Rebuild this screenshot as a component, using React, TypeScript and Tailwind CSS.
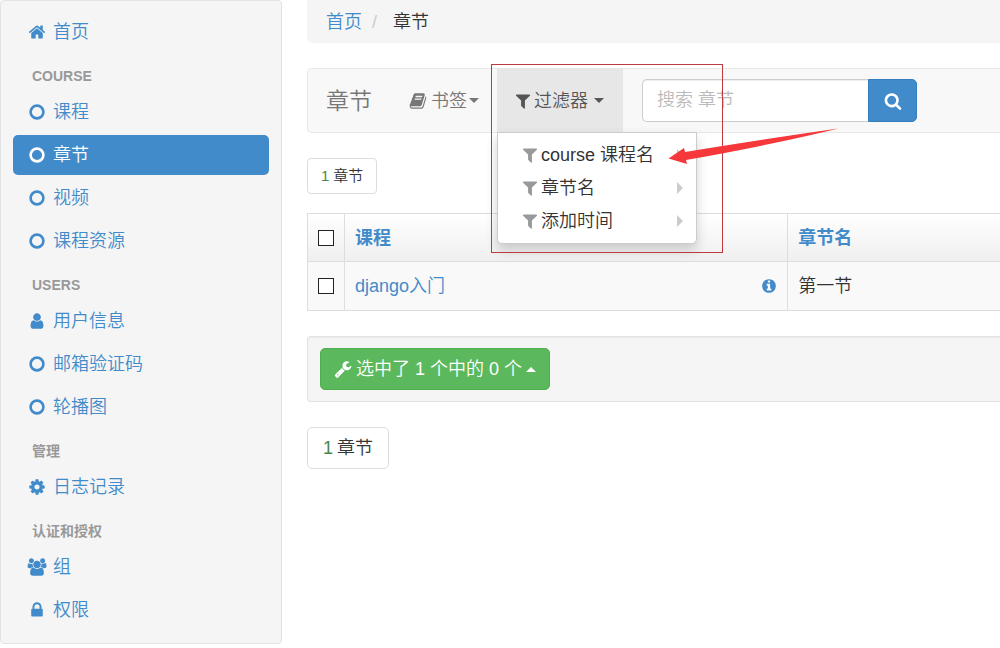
import { useState } from "react";
import type { ReactNode } from "react";
import clsx from "clsx";

const iconPaths = {
  home: "M1472 992v480q0 26-19 45t-45 19h-384v-384h-256v384h-384q-26 0-45-19t-19-45v-480q0-1 .5-3t.5-3l575-474 575 474q1 2 1 6zm223-69l-62 74q-8 9-21 11h-3q-13 0-21-7l-692-577-692 577q-12 8-24 7-13-2-21-11l-62-74q-8-10-7-23.5t11-21.5l719-599q32-26 76-26t76 26l244 204v-195q0-14 9-23t23-9h192q14 0 23 9t9 23v408l219 182q10 8 11 21.5t-7 23.5z",
  circle:
    "M896 128a768 768 0 0 1 0 1536a768 768 0 0 1 0-1536zM896 390a506 506 0 0 0 0 1012a506 506 0 0 0 0-1012z",
  user: "M1536 1399q0 109-62.5 187t-150.5 78h-854q-88 0-150.5-78t-62.5-187q0-85 8.5-160.5t31.5-152 58.5-131 94-89 134.5-34.5q131 128 313 128t313-128q76 0 134.5 34.5t94 89 58.5 131 31.5 152 8.5 160.5zm-256-887q0 159-112.5 271.5t-271.5 112.5-271.5-112.5-112.5-271.5 112.5-271.5 271.5-112.5 271.5 112.5 112.5 271.5z",
  cog: "M1152 896q0-106-75-181t-181-75-181 75-75 181 75 181 181 75 181-75 75-181zm512-109v222q0 12-8 23t-20 13l-185 28q-19 54-39 91 35 50 107 138 10 12 10 25t-9 23q-27 37-99 108t-94 71q-12 0-26-9l-138-108q-44 23-91 38-16 136-29 186-7 28-36 28h-222q-14 0-24.5-8.5t-11.5-21.5l-28-184q-49-16-90-37l-141 107q-10 9-25 9-14 0-25-11-126-114-165-168-7-10-7-23 0-12 8-23 15-21 51-66.5t54-70.5q-27-50-41-99l-183-27q-13-2-21-12.5t-8-23.5v-222q0-12 8-23t19-13l186-28q14-46 39-92-40-57-107-138-10-12-10-24 0-10 9-23 26-36 98.5-107.5t94.5-71.5q13 0 26 10l138 107q44-23 91-38 16-136 29-186 7-28 36-28h222q14 0 24.5 8.5t11.5 21.5l28 184q49 16 90 37l142-107q9-9 24-9 13 0 25 10 129 119 165 170 7 8 7 22 0 12-8 23-15 21-51 66.5t-54 70.5q26 50 41 98l183 28q13 2 21 12.5t8 23.5z",
  group:
    "M657 896q-162 5-265 128h-134q-82 0-138-40.5t-56-118.5q0-353 124-353 6 0 43.5 21t97.5 42.5 119 21.5q67 0 133-23-5 37-5 66 0 159 90 293zm1071 637q0 120-73 189.5t-194 69.5h-874q-121 0-194-69.5t-73-189.5q0-53 3.5-103.5t14-109 26.5-108.5 43-97.5 62-81 85.5-53.5 111.5-20q10 0 43 21.5t73 48 107 48 135 21.5 135-21.5 107-48 73-48 43-21.5q61 0 111.5 20t85.5 53.5 62 81 43 97.5 26.5 108.5 14 109 3.5 103.5zm-1024-1277q0 106-75 181t-181 75-181-75-75-181 75-181 181-75 181 75 75 181zm704 384q0 159-112.5 271.5t-271.5 112.5-271.5-112.5-112.5-271.5 112.5-271.5 271.5-112.5 271.5 112.5 112.5 271.5zm576 225q0 78-56 118.5t-138 40.5h-134q-103-123-265-128 90-134 90-293 0-29-5-66 66 23 133 23 59 0 119-21.5t97.5-42.5 43.5-21q124 0 124 353zm-128-609q0 106-75 181t-181 75-181-75-75-181 75-181 181-75 181 75 75 181z",
  lock: "M640 768h512v-192q0-106-75-181t-181-75-181 75-75 181v192zm832 96v576q0 40-28 68t-68 28h-960q-40 0-68-28t-28-68v-576q0-40 28-68t68-28h32v-192q0-184 132-316t316-132 316 132 132 316v192h32q40 0 68 28t28 68z",
  book: "M1703 478q40 57 18 129l-275 906q-19 64-76.5 107.5t-122.5 43.5h-923q-77 0-148.5-53.5t-99.5-131.5q-24-67-2-127 0-4 3-27t4-37q1-8-3-21.5t-3-19.5q2-11 8-21t16.5-23.5 16.5-23.5q23-38 45-91.5t30-91.5q3-10 .5-30t-.5-28q3-11 17-28t17-23q21-36 42-92t25-90q1-9-2.5-32t.5-28q4-13 22-30.5t22-22.5q19-26 42.5-84.5t27.5-96.5q1-8-3-25.5t-2-26.5q2-8 9-18t18-23 17-21q8-12 16.5-30.5t15-35 16-36 19.5-32 26.5-23.5 36-11.5 47.5 5.5l-1 3q38-9 51-9h761q74 0 114 56t18 130l-274 906q-36 119-71.5 153.5t-128.5 34.5h-869q-27 0-38 15-11 16-1 43 24 70 144 70h923q29 0 56-15.5t35-41.5l300-987q7-22 5-57 38 15 59 43zm-1064 2q-4 13 2 22.5t20 9.5h608q13 0 25.5-9.5t16.5-22.5l21-64q4-13-2-22.5t-20-9.5h-608q-13 0-25.5 9.5t-16.5 22.5zm-83 256q-4 13 2 22.5t20 9.5h608q13 0 25.5-9.5t16.5-22.5l21-64q4-13-2-22.5t-20-9.5h-608q-13 0-25.5 9.5t-16.5 22.5z",
  filter:
    "M1595 295q17 41-14 70l-493 493v742q0 42-39 59-13 5-25 5-27 0-45-19l-256-256q-19-19-19-45v-486l-493-493q-31-29-14-70 17-39 59-39h1280q42 0 59 39z",
  search:
    "M1216 832q0-185-131.5-316.5t-316.5-131.5-316.5 131.5-131.5 316.5 131.5 316.5 316.5 131.5 316.5-131.5 131.5-316.5zm512 832q0 52-38 90t-90 38q-54 0-90-38l-343-342q-179 124-399 124-143 0-273.5-55.5t-225-150-150-225-55.5-273.5 55.5-273.5 150-225 225-150 273.5-55.5 273.5 55.5 225 150 150 225 55.5 273.5q0 220-124 399l343 343q37 37 37 90z",
  info: "M1152 1376v-160q0-14-9-23t-23-9h-96v-512q0-14-9-23t-23-9h-320q-14 0-23 9t-9 23v160q0 14 9 23t23 9h96v320h-96q-14 0-23 9t-9 23v160q0 14 9 23t23 9h448q14 0 23-9t9-23zm-128-896v-160q0-14-9-23t-23-9h-192q-14 0-23 9t-9 23v160q0 14 9 23t23 9h192q14 0 23-9t9-23zm640 416q0 209-103 385.5t-279.5 279.5-385.5 103-385.5-103-279.5-279.5-103-385.5 103-385.5 279.5-279.5 385.5-103 385.5 103 279.5 279.5 103 385.5z",
  wrench:
    "M448 1472q0-26-19-45t-45-19-45 19-19 45 19 45 45 19 45-19 19-45zm644-420l-682 682q-37 37-90 37-52 0-91-37l-106-108q-38-36-38-90 0-53 38-91l681-681q39 98 114.5 173.5t173.5 114.5zm634-435q0 39-23 106-47 134-164.5 217.5t-258.5 83.5q-185 0-316.5-131.5t-131.5-316.5 131.5-316.5 316.5-131.5q58 0 121.5 16.5t107.5 46.5q16 11 16 28t-16 28l-293 169v224l193 107q5-3 79-48.5t135.5-81 70.5-35.5q15 0 23.5 10t8.5 25z",
};

type IconName = keyof typeof iconPaths;

function Icon({ name, className = "size-[18px]" }: { name: IconName; className?: string }) {
  return (
    <svg
      aria-hidden="true"
      viewBox={name === "group" ? "0 0 2048 1792" : "0 0 1792 1792"}
      className={clsx("shrink-0 fill-current", className)}
    >
      <path d={iconPaths[name]} />
    </svg>
  );
}

function Caret({ up = false }: { up?: boolean }) {
  return (
    <svg aria-hidden="true" viewBox="0 0 10 5" className="h-[5px] w-[10px] shrink-0 fill-current">
      <path d={up ? "M0 5L5 0L10 5Z" : "M0 0H10L5 5Z"} />
    </svg>
  );
}

const menuGroups: { title?: string; items: { label: string; icon: IconName }[] }[] = [
  { items: [{ label: "首页", icon: "home" }] },
  {
    title: "COURSE",
    items: [
      { label: "课程", icon: "circle" },
      { label: "章节", icon: "circle" },
      { label: "视频", icon: "circle" },
      { label: "课程资源", icon: "circle" },
    ],
  },
  {
    title: "USERS",
    items: [
      { label: "用户信息", icon: "user" },
      { label: "邮箱验证码", icon: "circle" },
      { label: "轮播图", icon: "circle" },
    ],
  },
  { title: "管理", items: [{ label: "日志记录", icon: "cog" }] },
  {
    title: "认证和授权",
    items: [
      { label: "组", icon: "group" },
      { label: "权限", icon: "lock" },
    ],
  },
];

const filters = ["course 课程名", "章节名", "添加时间"];

function Sidebar() {
  return (
    <nav className="w-[282px] shrink-0 rounded border border-[#e3e3e3] bg-[#f5f5f5] px-3 pt-[11px] pb-[13px]">
      {menuGroups.map((group, i) => (
        <div key={i}>
          {group.title && (
            <h2 className="px-[19px] pt-4 pb-2 text-sm leading-4 font-bold text-[#999]">
              {group.title}
            </h2>
          )}
          <ul className="flex flex-col gap-[3px]">
            {group.items.map((item) => (
              <li key={item.label}>
                <a
                  href="#"
                  className={clsx(
                    "flex h-10 items-center gap-[7px] rounded-[5px] px-[15px]",
                    item.label === "章节" ? "bg-[#428bca] text-white" : "text-[#428bca]"
                  )}
                >
                  <span className="flex w-[18px] justify-center">
                    <Icon
                      name={item.icon}
                      className={item.icon === "group" ? "h-[18px] w-5" : "size-[18px]"}
                    />
                  </span>
                  {item.label}
                </a>
              </li>
            ))}
          </ul>
        </div>
      ))}
    </nav>
  );
}

// red frame and arrow that point at the first filter
function Callout() {
  return (
    <svg
      aria-hidden="true"
      viewBox="0 0 350 190"
      className="pointer-events-none absolute -top-[5px] -left-1.5 z-20 h-[190px] w-[350px]"
    >
      <rect x="0.5" y="0.5" width="231" height="188" fill="none" stroke="#c0393f" />
      <path d="M177.500 94.500L193 84L194 88Q280 74 347.500 64.500Q280 81 195 96L196 100Z" fill="#f6383b" />
    </svg>
  );
}

function FilterMenu() {
  const [open, setOpen] = useState(true);
  return (
    <div className="relative flex">
      <button
        type="button"
        aria-expanded={open}
        onClick={() => setOpen(!open)}
        className={clsx(
          "flex items-center pr-[19px] pl-[17px]",
          open ? "bg-[#e7e7e7] text-[#555]" : "text-[#777]"
        )}
      >
        <Icon name="filter" />
        <span className="mr-1.5 ml-0.5">过滤器</span>
        <Caret />
      </button>
      {open && (
        <ul className="absolute top-full left-0 z-10 flex w-[200px] flex-col gap-px rounded-b-[5px] border border-[#ccc] bg-white py-1.5 shadow-[0_6px_12px_rgba(0,0,0,0.18)]">
          {filters.map((filter) => (
            <li key={filter}>
              <a href="#" className="flex h-8 items-center pr-[13px] pl-[23px] text-[#333]">
                <Icon name="filter" className="size-[18px] text-[#999]" />
                <span className="ml-0.5 flex-1">{filter}</span>
                <svg aria-hidden="true" viewBox="0 0 6 12" className="h-3 w-1.5 fill-[#ccc]">
                  <path d="M0 0L6 6L0 12Z" />
                </svg>
              </a>
            </li>
          ))}
        </ul>
      )}
      <Callout />
    </div>
  );
}

function Toolbar() {
  return (
    <div className="flex h-[65px] rounded-l-[5px] border border-r-0 border-[#e7e7e7] bg-[#f8f8f8]">
      <h1 className="flex items-center px-[18px] text-[23px] text-[#777]">章节</h1>
      <button type="button" className="flex items-center pr-[18px] pl-[19px] text-[#777]">
        <Icon name="book" />
        <span className="mr-0.5 ml-1">书签</span>
        <Caret />
      </button>
      <FilterMenu />
      <form className="flex items-center pl-[19px]" onSubmit={(e) => e.preventDefault()}>
        <input
          type="text"
          aria-label="搜索 章节"
          placeholder="搜索 章节"
          className="h-[43px] w-[226px] rounded-l-[5px] border border-r-0 border-[#ccc] bg-white px-3.5 shadow-[inset_0_1px_1px_rgba(0,0,0,0.075)] outline-none placeholder:text-[#bbb]"
        />
        <button
          type="submit"
          aria-label="搜索"
          className="flex h-[43px] w-[49px] items-center justify-center rounded-r-[5px] border border-[#357ebd] bg-[#428bca] text-white"
        >
          <Icon name="search" />
        </button>
      </form>
    </div>
  );
}

function Cell({ children, className }: { children: ReactNode; className?: string }) {
  return <td className={clsx("border border-[#ddd] px-2.5", className)}>{children}</td>;
}

const checkboxClass =
  "block size-4 appearance-none border border-[#222] bg-white checked:bg-[#428bca]";

function ChapterTable() {
  const [selected, setSelected] = useState(false);
  const toggle = () => setSelected(!selected);
  return (
    <table className="w-full table-fixed border-collapse">
      <colgroup>
        <col className="w-[37px]" />
        <col className="w-[64%]" />
        <col />
      </colgroup>
      <thead>
        <tr className="h-12 bg-linear-to-b from-white to-[#efefef] text-left text-[#428bca]">
          <th className="border border-[#ddd] px-2.5">
            <input type="checkbox" aria-label="全选" checked={selected} onChange={toggle} className={checkboxClass} />
          </th>
          <th className="border border-[#ddd] px-2.5 font-bold">
            <a href="#">课程</a>
          </th>
          <th className="border border-r-0 border-[#ddd] px-2.5 font-bold">
            <a href="#">章节名</a>
          </th>
        </tr>
      </thead>
      <tbody>
        <tr className="h-[49px] bg-[#f9f9f9]">
          <Cell>
            <input type="checkbox" aria-label="第一节" checked={selected} onChange={toggle} className={checkboxClass} />
          </Cell>
          <Cell>
            <div className="flex items-center justify-between text-[#428bca]">
              <a href="#">django入门</a>
              <button type="button" aria-label="详情">
                <Icon name="info" className="size-4" />
              </button>
            </div>
          </Cell>
          <Cell className="border-r-0">第一节</Cell>
        </tr>
      </tbody>
    </table>
  );
}

export default function App() {
  return (
    <div className="flex items-start overflow-hidden bg-white font-['Liberation_Sans','Noto_Sans_CJK_SC',sans-serif] text-lg leading-6 font-[350] text-[#333]">
      <Sidebar />
      <main className="ml-[25px] min-w-0 flex-1">
        <ol className="flex h-[43px] items-center rounded-bl-[5px] bg-[#f5f5f5] pl-[19px]">
          <li>
            <a href="#" className="text-[#428bca]">首页</a>
          </li>
          <li className="px-2.5 text-[#ccc]">/</li>
          <li className="ml-1.5">章节</li>
        </ol>
        <div className="mt-[25px]">
          <Toolbar />
        </div>
        <button type="button" className="mt-[25px] flex h-9 items-center gap-1 rounded border border-[#ddd] px-[13px] text-[15px]">
          <span className="text-[#468847]">1</span>章节
        </button>
        <div className="mt-[19px]">
          <ChapterTable />
        </div>
        <div className="mt-[25px] rounded-l border border-r-0 border-[#e3e3e3] bg-[#f5f5f5] px-3 py-[11px] shadow-[inset_0_1px_1px_rgba(0,0,0,0.05)]">
          <button
            type="button"
            className="flex h-[42px] items-center rounded-[5px] border border-[#4cae4c] bg-[#5cb85c] px-[13px] text-white"
          >
            <Icon name="wrench" />
            <span className="mx-1">选中了 1 个中的 0 个</span>
            <Caret up />
          </button>
        </div>
        <button type="button" className="mt-[25px] flex h-[42px] items-center gap-1 rounded-[5px] border border-[#ddd] px-[15px]">
          <span className="text-[#468847]">1</span>章节
        </button>
      </main>
    </div>
  );
}
